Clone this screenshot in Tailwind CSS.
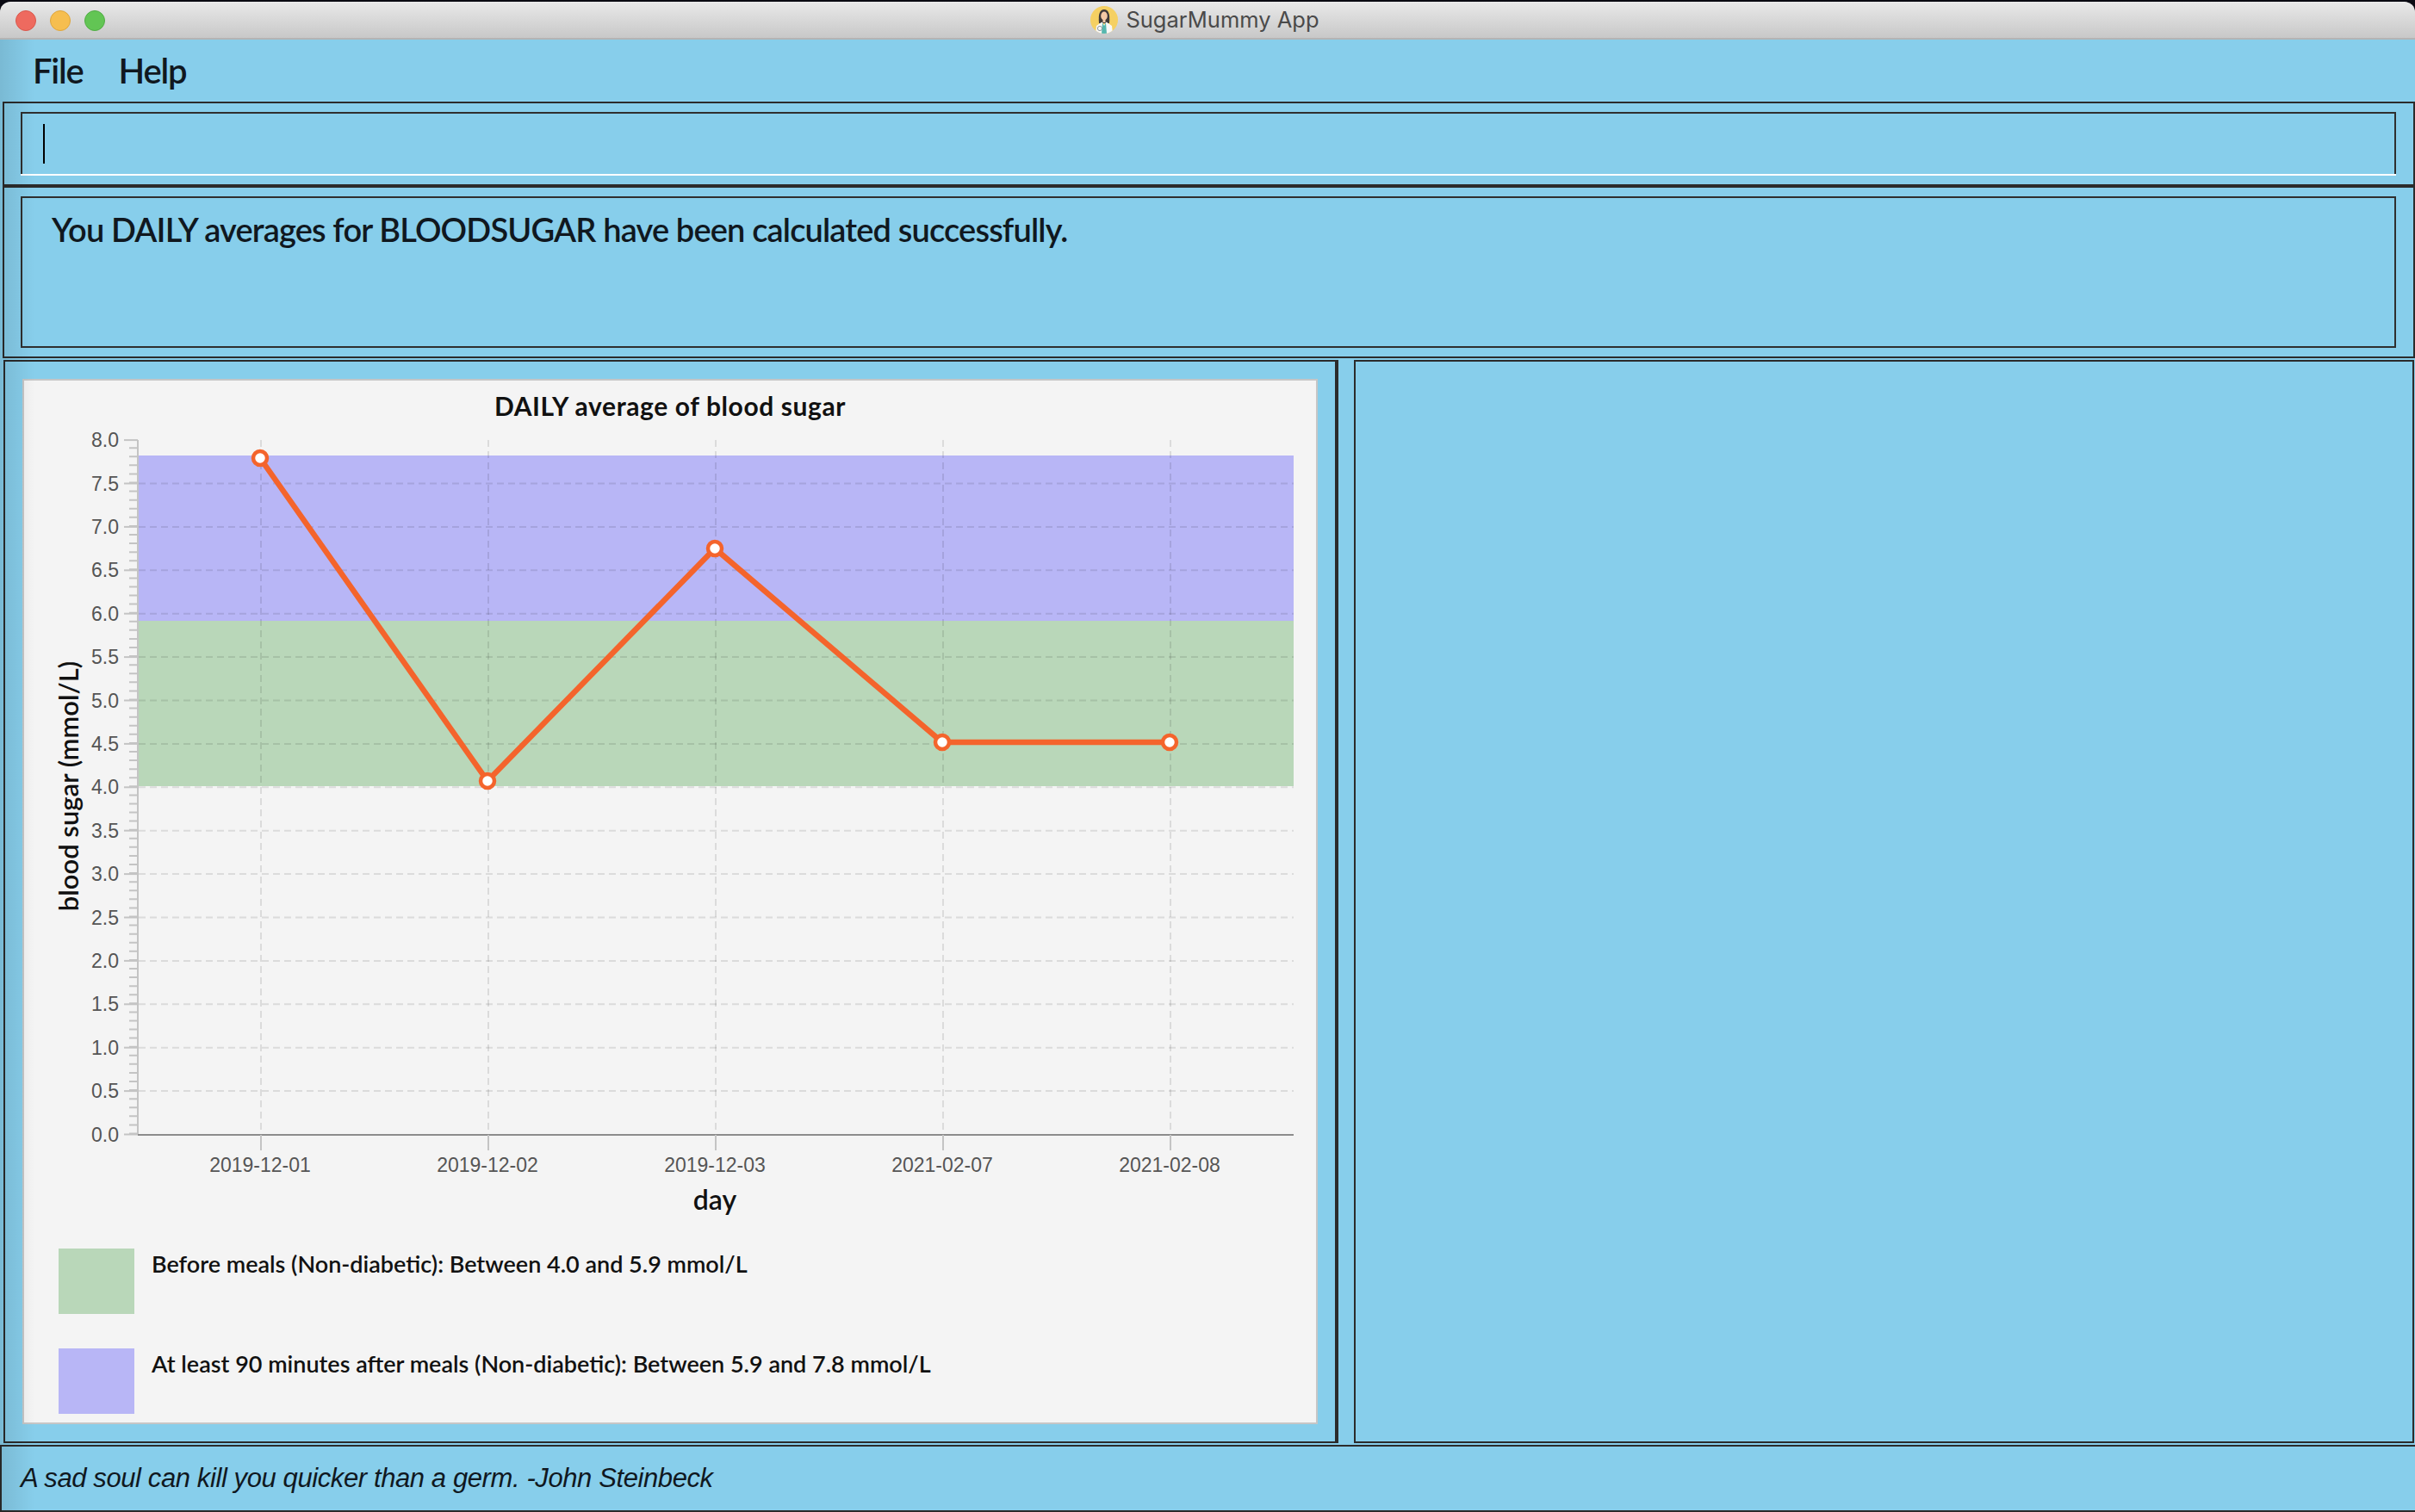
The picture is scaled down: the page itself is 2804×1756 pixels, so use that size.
<!DOCTYPE html>
<html lang="en">
<head>
    <meta charset="UTF-8">
    <meta name="viewport" content="width=device-width, initial-scale=1.0">
    <title>SugarMummy App</title>
    <script src="https://cdn.jsdelivr.net/npm/@tailwindcss/browser@4"></script>
</head>
<body class="bg-[#0a0a12]">
    <div class="w-[2804px] h-[1756px] pt-[2px] flex flex-col bg-[#87ceeb] overflow-hidden relative">
        <!-- corners behind the window -->
        <div class="absolute top-0 left-0 w-full h-[16px] bg-[#0a0a12]"></div>

        <!-- title bar -->
        <div class="relative h-[44px] shrink-0 flex items-center justify-center rounded-t-[12px] border-b-2 border-[#b4b4b4] bg-gradient-to-b from-[#e9e9e9] to-[#c8c8c8]">
            <div class="absolute left-[18px] top-[10px] flex gap-[16px]">
                <span class="w-[24px] h-[24px] rounded-full bg-[#ee6a5f] border border-[#d9574c]"></span>
                <span class="w-[24px] h-[24px] rounded-full bg-[#f6be4f] border border-[#dfa63c]"></span>
                <span class="w-[24px] h-[24px] rounded-full bg-[#62c554] border border-[#50ad44]"></span>
            </div>
            <div class="flex items-center gap-[9px] mr-[6px]">
                <svg width="32" height="32" viewBox="0 0 32 32">
                    <clipPath id="badge"><circle cx="16" cy="16" r="16"/></clipPath>
                    <g clip-path="url(#badge)">
                        <rect width="32" height="32" fill="#f5d062"/>
                        <path d="M10 20 C9 9 11 4 16 4 C21 4 23 9 22 20 Z" fill="#3f3a3a"/>
                        <ellipse cx="16" cy="11.5" rx="3.8" ry="5" fill="#f3c9a5"/>
                        <path d="M14.5 15h3v4h-3z" fill="#f3c9a5"/>
                        <path d="M6 32 L7 23 L13.5 18.5 L16 22 L18.5 18.5 L25 23 L26 32 Z" fill="#f8f8f8"/>
                        <path d="M14 19.5 L16 23 L18 19.5 L19 32 H13 Z" fill="#56b7ae"/>
                        <circle cx="11" cy="26" r="2.6" fill="none" stroke="#8f9a9a" stroke-width="1"/>
                    </g>
                </svg>
                <span class="font-[Inter,sans-serif] text-[25.5px] leading-none text-[#4a4a4a]">SugarMummy App</span>
            </div>
        </div>

        <!-- menu -->
        <div class="relative h-[72px] shrink-0 flex items-center pl-[38px] gap-[41px] font-[Lato,sans-serif] text-[40px] tracking-[-1.2px] font-semibold text-[#10181f]">
            <span>File</span>
            <span>Help</span>
        </div>

        <!-- command box -->
        <div class="relative h-[98px] shrink-0 ml-[3px] border-2 border-[#2b2b2b] pt-[10px] pl-[19px] pr-[20px]">
            <div class="h-[74px] border-2 border-b-0 border-[#2f2f2f] relative">
                <div class="absolute left-[24px] top-[12px] w-[2px] h-[46px] bg-black"></div>
                <div class="absolute left-[-2px] right-[-2px] bottom-0 h-[2px] bg-white"></div>
            </div>
        </div>

        <!-- result box -->
        <div class="relative h-[200px] shrink-0 ml-[3px] border-2 border-[#2b2b2b] pt-[10px] pl-[19px] pr-[20px]">
            <div class="h-[176px] border-2 border-[#2f2f2f] pl-[34px] pt-[13px] font-[Lato,sans-serif] text-[38px] tracking-[-0.85px] leading-[46px] font-semibold text-[#10181f]">
                You DAILY averages for BLOODSUGAR have been calculated successfully.
            </div>
        </div>

        <!-- chart and side panel -->
        <div class="relative h-[1258px] shrink-0 mt-[2px] flex">
            <div class="w-[1550px] ml-[4px] border-2 border-r-4 border-[#2b2b2b] pt-[20px] pl-[20px]">
                <div class="w-[1504px] h-[1214px] border-2 border-[#c6c6c6] bg-[#f4f4f4] flex flex-col">
                    <div class="h-[58px] shrink-0 flex items-center justify-center font-[Lato,sans-serif] text-[30px] tracking-[0.6px] font-bold text-[#111]">DAILY average of blood sugar</div>
                    <svg id="chart" class="shrink-0" width="1500" height="950" viewBox="28 500 1500 950">
                        <rect x="161" y="529" width="1341" height="192" fill="#b8b6f6"/>
                        <rect x="161" y="721" width="1341" height="192" fill="#b9d7b9"/>
                        <g id="grid" fill="none" stroke="#000" stroke-opacity="0.1" stroke-width="2" stroke-dasharray="8 5"></g>
                        <!-- axes -->
                        <path d="M160 511V1318" stroke="#c4c4c4" stroke-width="2"/>
                        <path d="M155 1317.5V511" fill="none" stroke="#c4c4c4" stroke-width="10" stroke-dasharray="2 8.08"/>
                        <path d="M160 1318H1502" stroke="#8c8c8c" stroke-width="2"/>
                        <g id="labels" font-family="Liberation Sans, sans-serif" font-size="23" fill="#555"></g>
                        <polyline points="302,532 566,907 830,637 1094,862 1358,862" fill="none" stroke="#f4642c" stroke-width="6.5"/>
                        <g id="points" fill="#fff" stroke="#f4642c" stroke-width="4.5"></g>
                        <text x="830" y="1405" text-anchor="middle" font-family="Lato, sans-serif" font-size="32" font-weight="600" fill="#111">day</text>
                        <text transform="translate(91 913) rotate(-90)" text-anchor="middle" font-family="Lato, sans-serif" font-size="31" font-weight="600" fill="#111">blood sugar (mmol/L)</text>
                    </svg>
                    <div class="pl-[40px] flex flex-col gap-[40px] font-[Lato,sans-serif] text-[27px] font-semibold text-[#111]">
                        <div class="flex gap-[20px]">
                            <div class="w-[88px] h-[76px] bg-[#b9d7b9]"></div>
                            <div class="-mt-[2px]">Before meals (Non-diabetic): Between 4.0 and 5.9 mmol/L</div>
                        </div>
                        <div class="flex gap-[20px]">
                            <div class="w-[88px] h-[76px] bg-[#b8b6f6]"></div>
                            <div class="-mt-[2px]">At least 90 minutes after meals (Non-diabetic): Between 5.9 and 7.8 mmol/L</div>
                        </div>
                    </div>
                </div>
            </div>
            <div class="w-[1231px] ml-[18px] border-2 border-[#2b2b2b]"></div>
        </div>

        <!-- quote -->
        <div class="relative h-[78px] shrink-0 mt-[2px] border-2 border-r-0 border-[#2b2b2b] flex items-center pl-[22px] font-['Liberation_Sans',sans-serif] text-[31px] tracking-[-0.4px] italic text-[#10181f]">
            A sad soul can kill you quicker than a germ. -John Steinbeck
        </div>

        <!-- window shading along the left edge -->
        <div class="absolute left-0 top-[46px] bottom-0 w-[40px] bg-gradient-to-r from-black/10 to-transparent pointer-events-none"></div>
    </div>

    <script>
        const NS = 'http://www.w3.org/2000/svg';
        const make = (parent, tag, attrs, text) => {
            const el = document.createElementNS(NS, tag);
            Object.entries(attrs).forEach(([k, v]) => el.setAttribute(k, v));
            if (text) el.textContent = text;
            document.getElementById(parent).appendChild(el);
        };
        const yFor = (v) => 1317.5 - v * 100.8;
        for (let i = 0; i <= 16; i++) {
            const v = i / 2;
            const y = yFor(v);
            if (i > 0 && i < 16) make('grid', 'path', { d: `M161 ${y}H1502` });
            make('labels', 'path', { d: `M144 ${y}H160`, stroke: '#c4c4c4', 'stroke-width': 2 });
            make('labels', 'text', { x: 138, y: y + 8, 'text-anchor': 'end' }, v.toFixed(1));
        }
        const days = ['2019-12-01', '2019-12-02', '2019-12-03', '2021-02-07', '2021-02-08'];
        days.forEach((d, i) => {
            const x = 303 + i * 264;
            make('grid', 'path', { d: `M${x} 511V1317` });
            make('labels', 'path', { d: `M${x} 1318V1336`, stroke: '#c4c4c4', 'stroke-width': 2 });
            make('labels', 'text', { x: x - 1, y: 1361, 'text-anchor': 'middle' }, d);
        });
        [[302, 532], [566, 907], [830, 637], [1094, 862], [1358, 862]].forEach(([cx, cy]) => {
            make('points', 'circle', { cx, cy, r: 8 });
        });
    </script>
</body>
</html>
